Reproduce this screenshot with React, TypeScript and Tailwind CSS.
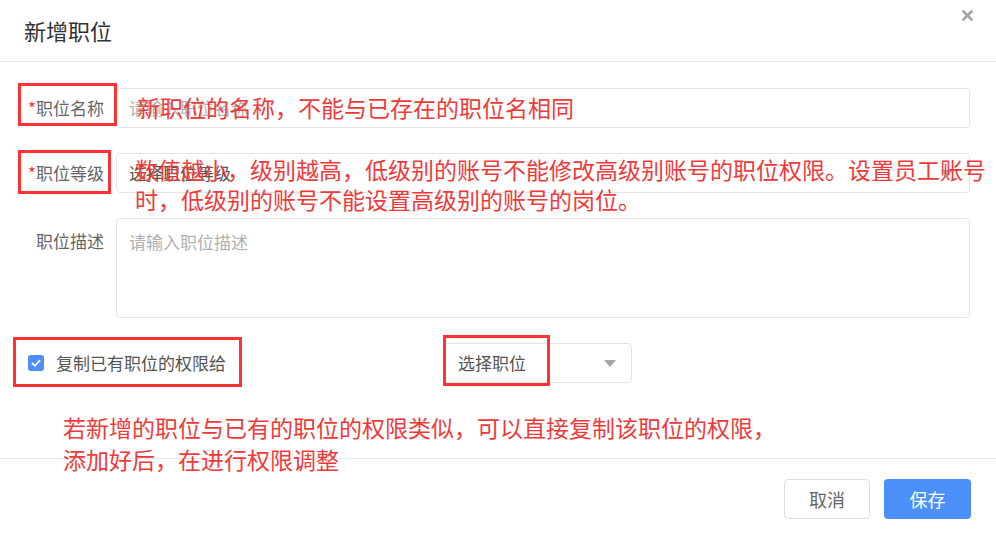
import React from "react";

const font = { fontFamily: '"Noto Sans CJK SC", "Noto Sans", sans-serif' };

function Caret({ className }: { className: string }) {
  return (
    <svg className={className} width="12" height="7" viewBox="0 0 12 7">
      <path d="M0 0 H12 L6 7 Z" fill="#a6a6a6" />
    </svg>
  );
}

function FieldRow({
  label,
  required,
  children,
  alignTop,
}: {
  label: string;
  required?: boolean;
  children: React.ReactNode;
  alignTop?: boolean;
}) {
  return (
    <div className={`flex ${alignTop ? "items-start" : "items-center"}`}>
      <div
        className={`w-[104px] shrink-0 text-right text-[17px] text-[#666] ${alignTop ? "pt-[10px]" : ""}`}
      >
        {required ? <span className="text-[#f33]">*</span> : null}
        {label}
      </div>
      <div className="ml-3 flex-1">{children}</div>
    </div>
  );
}

export default function App() {
  return (
    <div className="relative h-[538px] w-[996px] overflow-hidden bg-white" style={font}>
      {/* header */}
      <div className="flex h-[62px] items-center border-b border-[#e8e8e8] px-6">
        <h1 className="text-[22px] text-[#333]">新增职位</h1>
      </div>
      <button className="absolute right-[23px] top-[10px] flex h-[11px] w-[11px] items-center justify-center">
        <svg width="11" height="11" viewBox="0 0 11 11">
          <path d="M1.5 1.5 L9.5 9.5 M9.5 1.5 L1.5 9.5" stroke="#a3a3a3" strokeWidth="2.6" strokeLinecap="round" />
        </svg>
      </button>

      {/* form */}
      <div className="flex flex-col gap-[25px] pr-[26px] pt-[26px]">
        <FieldRow label="职位名称" required>
          <div className="flex h-10 items-center rounded border border-[#e4e4e4] px-3 text-[17px] text-[#b0b0b0]">
            请输入职位名称
          </div>
        </FieldRow>
        <FieldRow label="职位等级" required>
          <div className="flex h-10 items-center justify-between rounded border border-[#e4e4e4] px-3 text-[17px] text-[#555]">
            <span>选择职位等级</span>
            <Caret className="mr-1" />
          </div>
        </FieldRow>
        <FieldRow label="职位描述" alignTop>
          <div className="h-[100px] rounded border border-[#e4e4e4] px-3 pt-[10px] text-[17px] text-[#b0b0b0]">
            请输入职位描述
          </div>
        </FieldRow>
        <div className="flex items-center">
          <div className="flex w-[444px] items-center pl-[28px]">
            <span className="flex h-4 w-4 items-center justify-center rounded-[3px] bg-[#4d8ef8]">
              <svg width="10" height="8" viewBox="0 0 10 8">
                <path d="M1 4 L4 6.8 L9 1.2" fill="none" stroke="white" strokeWidth="1.8" />
              </svg>
            </span>
            <span className="ml-3 text-[17px] text-[#555]">复制已有职位的权限给</span>
          </div>
          <div className="flex h-[40px] w-[188px] items-center justify-between rounded border border-[#e4e4e4] pl-[13px] pr-[15px] text-[17px] text-[#555]">
            <span>选择职位</span>
            <Caret className="" />
          </div>
        </div>
      </div>

      {/* footer */}
      <div className="absolute inset-x-0 top-[458px] flex justify-end gap-[14px] border-t border-[#e8e8e8] pr-[25px] pt-[20px]">
        <button className="h-[40px] w-[86px] rounded border border-[#dedede] bg-white text-[18px] text-[#666]">
          取消
        </button>
        <button className="h-[40px] w-[87px] rounded bg-[#4a90f8] text-[18px] text-white">保存</button>
      </div>

      {/* annotations */}
      <div className="pointer-events-none absolute left-[18px] top-[83px] h-[43px] w-[99px] border-[3px] border-[#f33]" />
      <div className="pointer-events-none absolute left-[18px] top-[150px] h-[44px] w-[93px] border-[3px] border-[#f33]" />
      <div className="pointer-events-none absolute left-[13px] top-[337px] h-[50px] w-[229px] border-[3px] border-[#f33]" />
      <div className="pointer-events-none absolute left-[443px] top-[335px] h-[51px] w-[107px] border-[3px] border-[#f33]" />

      <p className="pointer-events-none absolute left-[137px] top-[91px] text-[23px] leading-[32px] text-[#f03a3a]">
        新职位的名称，不能与已存在的职位名相同
      </p>
      <p className="pointer-events-none absolute left-[135px] top-[154px] w-[860px] text-[23px] leading-[30px] text-[#f03a3a]">
        数值越小，级别越高，低级别的账号不能修改高级别账号的职位权限。设置员工账号
        <br />
        时，低级别的账号不能设置高级别的账号的岗位。
      </p>
      <p className="pointer-events-none absolute left-[63px] top-[411px] text-[23px] leading-[32px] text-[#f03a3a]">
        若新增的职位与已有的职位的权限类似，可以直接复制该职位的权限，
        <br />
        添加好后，在进行权限调整
      </p>
    </div>
  );
}
